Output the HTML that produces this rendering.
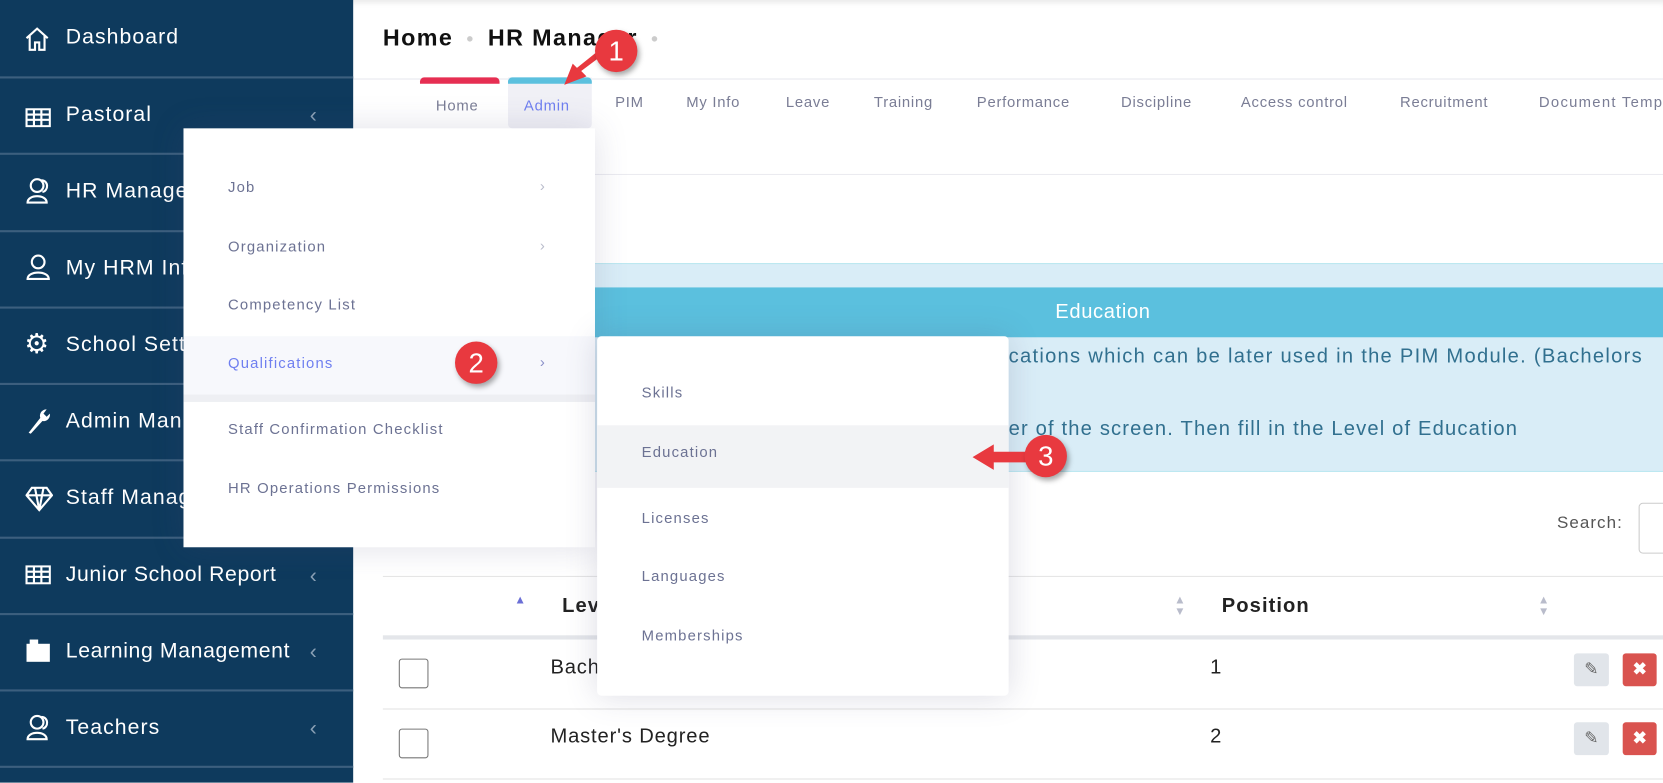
<!DOCTYPE html>
<html><head><meta charset="utf-8">
<style>
html,body{margin:0;padding:0;width:1663px;height:783px;overflow:hidden;background:#fff;}
#w{position:absolute;left:0;top:0;width:1568px;height:738px;transform:scale(1.06059);transform-origin:0 0;font-family:"Liberation Sans",sans-serif;overflow:hidden;}
.a{position:absolute;}
.sb{left:0;top:0;width:333px;height:738px;background:#0e3a5d;}
.sl{left:0;width:333px;height:2px;background:#3c5f7e;}
.st{color:#fff;font-size:20px;letter-spacing:1px;white-space:nowrap;}
.chev{color:#8aa0b5;font-size:20px;}
.tab{color:#7a7d95;font-size:14px;letter-spacing:.7px;white-space:nowrap;}
.m{color:#6c7293;font-size:14px;letter-spacing:1.1px;white-space:nowrap;}
.gt{color:#b9bccb;font-size:14px;}
.num{width:40px;height:40px;border-radius:50%;background:#e8393f;color:#fff;font-size:26px;text-align:center;line-height:40px;box-shadow:2px 3px 5px rgba(0,0,0,.35);}
</style></head><body><div id="w">
<div class="a" style="left:333px;top:0;width:1235px;height:74px;background:#fff;border-bottom:1px solid #e6e7ee;box-shadow:inset 0 6px 6px -4px rgba(0,0,0,.1)"></div>
<div class="a" style="left:361px;top:23px;font-size:22px;font-weight:bold;color:#111;letter-spacing:1.3px;white-space:nowrap">Home <span style="color:#ccc;font-size:12px;vertical-align:3px">&nbsp;●&nbsp;</span> HR Manager <span style="color:#ccc;font-size:12px;vertical-align:3px">&nbsp;●</span></div>
<div class="a" style="left:396px;top:73px;width:75px;height:6px;background:#e62e52;border-radius:4px 4px 0 0"></div>
<div class="a" style="left:479px;top:73px;width:79px;height:48px;background:#f0f0f6;border-radius:0 0 4px 4px"></div>
<div class="a" style="left:479px;top:73px;width:79px;height:6px;background:#5bc0de;border-radius:4px 4px 0 0"></div>
<div class="a tab" style="left:411px;top:91px">Home</div>
<div class="a tab" style="left:494px;top:91px;color:#6f7ff0">Admin</div>
<div class="a tab" style="left:580px;top:88px">PIM</div>
<div class="a tab" style="left:647px;top:88px">My Info</div>
<div class="a tab" style="left:741px;top:88px">Leave</div>
<div class="a tab" style="left:824px;top:88px">Training</div>
<div class="a tab" style="left:921px;top:88px">Performance</div>
<div class="a tab" style="left:1057px;top:88px">Discipline</div>
<div class="a tab" style="left:1170px;top:88px">Access control</div>
<div class="a tab" style="left:1320px;top:88px">Recruitment</div>
<div class="a tab" style="left:1451px;top:88px;letter-spacing:1.2px">Document Templates</div>
<div class="a" style="left:333px;top:164px;width:1235px;height:1px;background:#ebebf0"></div>
<div class="a" style="left:361px;top:248px;width:1220px;height:195px;background:#d9edf7;border:1px solid #bce8f1"></div>
<div class="a" style="left:361px;top:271px;width:1220px;height:47px;background:#5bc0de"></div>
<div class="a" style="left:995px;top:284px;color:#fff;font-size:19px;letter-spacing:.6px">Education</div>
<div class="a" style="left:951px;top:326px;color:#31708f;font-size:19px;white-space:nowrap;letter-spacing:1.2px">cations which can be later used in the PIM Module. (Bachelors</div>
<div class="a" style="left:951px;top:394px;color:#31708f;font-size:19px;white-space:nowrap;letter-spacing:1.1px">er of the screen. Then fill in the Level of Education</div>
<div class="a" style="left:1468px;top:485px;color:#555;font-size:16px;letter-spacing:1px">Search:</div>
<div class="a" style="left:1545px;top:474px;width:40px;height:46px;border:1px solid #ccc;border-radius:4px"></div>
<div class="a" style="left:361px;top:543px;width:1220px;height:1px;background:#e5e5e5"></div>
<div class="a" style="left:361px;top:599px;width:1220px;height:4px;background:#e4e6ea"></div>
<div class="a" style="left:361px;top:668px;width:1220px;height:1px;background:#e2e2e2"></div>
<div class="a" style="left:361px;top:734px;width:1220px;height:1px;background:#e2e2e2"></div>
<div class="a" style="left:485px;top:560px;color:#6b6fd6;font-size:11px">▲</div>
<div class="a" style="left:530px;top:561px;font-size:19px;font-weight:bold;color:#222;letter-spacing:1px">Level</div>
<div class="a gt" style="left:1107px;top:561px;line-height:11px;font-size:11px">▲<br>▼</div>
<div class="a" style="left:1152px;top:561px;font-size:19px;font-weight:bold;color:#222;letter-spacing:1px">Position</div>
<div class="a gt" style="left:1450px;top:561px;line-height:11px;font-size:11px">▲<br>▼</div>
<div class="a" style="left:376px;top:621px;width:26px;height:26px;border:1px solid #777;border-radius:3px"></div>
<div class="a" style="left:376px;top:687px;width:26px;height:26px;border:1px solid #777;border-radius:3px"></div>
<div class="a" style="left:519px;top:619px;font-size:19px;color:#222;letter-spacing:.8px">Bachelor's Degree</div>
<div class="a" style="left:519px;top:684px;font-size:19px;color:#222;letter-spacing:.8px">Master's Degree</div>
<div class="a" style="left:1141px;top:619px;font-size:19px;color:#222">1</div>
<div class="a" style="left:1141px;top:684px;font-size:19px;color:#222">2</div>
<div class="a" style="left:1484px;top:616px;width:33px;height:31px;background:#e1e5ea;border-radius:3px;color:#666;text-align:center;line-height:31px;font-size:16px">✎</div>
<div class="a" style="left:1530px;top:616px;width:32px;height:31px;background:#d9534f;border-radius:3px;color:#fff;text-align:center;line-height:31px;font-size:16px;font-weight:bold">✖</div>
<div class="a" style="left:1484px;top:681px;width:33px;height:31px;background:#e1e5ea;border-radius:3px;color:#666;text-align:center;line-height:31px;font-size:16px">✎</div>
<div class="a" style="left:1530px;top:681px;width:32px;height:31px;background:#d9534f;border-radius:3px;color:#fff;text-align:center;line-height:31px;font-size:16px;font-weight:bold">✖</div>
<div class="a sb"></div>
<div class="a sl" style="top:72px"></div><div class="a sl" style="top:144px"></div><div class="a sl" style="top:217px"></div><div class="a sl" style="top:289px"></div><div class="a sl" style="top:361px"></div><div class="a sl" style="top:433px"></div><div class="a sl" style="top:506px"></div><div class="a sl" style="top:578px"></div><div class="a sl" style="top:650px"></div><div class="a sl" style="top:722px"></div>
<svg class="a" style="left:22px;top:24px" width="26" height="26" viewBox="0 0 26 26" fill="none" stroke="#fff" stroke-width="2"><path d="M3 12 L13 3 L23 12 M6 10 V23 H11 V16 H15 V23 H20 V10"/></svg>
<div class="a st" style="left:62px;top:24px">Dashboard</div>
<svg class="a" style="left:24px;top:102px" width="24" height="18"><rect x="1" y="1" width="22" height="16" fill="none" stroke="#fff" stroke-width="2"/><path d="M1 6H23M1 11H23M8 1V17M15 1V17" stroke="#fff" stroke-width="2"/></svg>
<div class="a st" style="left:62px;top:97px">Pastoral</div><div class="a chev" style="left:292px;top:98px">‹</div>
<svg class="a" style="left:24px;top:167px" width="26" height="26" viewBox="0 0 26 26" fill="none" stroke="#fff" stroke-width="2"><circle cx="11" cy="8" r="6"/><path d="M2 24 C2 16 20 16 20 24 Z"/><path d="M15 3 C22 3 22 13 16 14"/></svg>
<div class="a st" style="left:62px;top:169px">HR Manager</div>
<svg class="a" style="left:24px;top:239px" width="26" height="26" viewBox="0 0 26 26" fill="none" stroke="#fff" stroke-width="2"><circle cx="12" cy="8" r="6"/><path d="M2 24 C2 16 22 16 22 24 Z"/></svg>
<div class="a st" style="left:62px;top:242px">My HRM Info</div>
<div class="a" style="left:23px;top:309px;color:#fff;font-size:26px">⚙</div>
<div class="a st" style="left:62px;top:314px">School Settings</div>
<svg class="a" style="left:24px;top:384px" width="24" height="26" viewBox="0 0 24 26"><path d="M3 24 L14 10 A6 6 0 0 1 20 2 L17 6 L20 9 L23 6 A6 6 0 0 1 16 13 L5 25 Z" fill="#fff"/></svg>
<div class="a st" style="left:62px;top:386px">Admin Manager</div>
<svg class="a" style="left:24px;top:457px" width="26" height="26" viewBox="0 0 26 26" fill="none" stroke="#fff" stroke-width="2"><path d="M6 3H20L25 10L13 24L1 10Z M1 10H25 M9 3L13 24L17 3"/></svg>
<div class="a st" style="left:62px;top:458px">Staff Management</div>
<svg class="a" style="left:24px;top:533px" width="24" height="18"><rect x="1" y="1" width="22" height="16" fill="none" stroke="#fff" stroke-width="2"/><path d="M1 6H23M1 11H23M8 1V17M15 1V17" stroke="#fff" stroke-width="2"/></svg>
<div class="a st" style="left:62px;top:531px;letter-spacing:.6px">Junior School Report</div><div class="a chev" style="left:292px;top:532px">‹</div>
<svg class="a" style="left:24px;top:601px" width="24" height="24"><rect x="1" y="6" width="22" height="17" fill="#fff"/><rect x="4" y="2" width="8" height="5" fill="#fff"/></svg>
<div class="a st" style="left:62px;top:603px;letter-spacing:.6px">Learning Management</div><div class="a chev" style="left:292px;top:604px">‹</div>
<svg class="a" style="left:24px;top:673px" width="26" height="26" viewBox="0 0 26 26" fill="none" stroke="#fff" stroke-width="2"><circle cx="11" cy="8" r="6"/><path d="M2 24 C2 16 20 16 20 24 Z"/><path d="M15 3 C22 3 22 13 16 14"/></svg>
<div class="a st" style="left:62px;top:675px">Teachers</div><div class="a chev" style="left:292px;top:676px">‹</div>
<div class="a" style="left:173px;top:121px;width:388px;height:395px;background:#fff;box-shadow:0 0 30px rgba(80,80,120,.18)"></div>
<div class="a" style="left:173px;top:317px;width:388px;height:55px;background:#f7f8fc"></div>
<div class="a" style="left:173px;top:372px;width:388px;height:7px;background:#eeeff3"></div>
<div class="a m" style="left:215px;top:168px">Job</div><div class="a gt" style="left:509px;top:167px">›</div>
<div class="a m" style="left:215px;top:224px">Organization</div><div class="a gt" style="left:509px;top:223px">›</div>
<div class="a m" style="left:215px;top:279px">Competency List</div>
<div class="a m" style="left:215px;top:334px;color:#6f7ff0">Qualifications</div><div class="a gt" style="left:509px;top:333px;color:#8a90c8">›</div>
<div class="a m" style="left:215px;top:396px">Staff Confirmation Checklist</div>
<div class="a m" style="left:215px;top:452px">HR Operations Permissions</div>
<div class="a" style="left:563px;top:317px;width:388px;height:339px;background:#fff;border-radius:4px;box-shadow:0 0 30px rgba(80,80,120,.2)"></div>
<div class="a" style="left:563px;top:401px;width:388px;height:59px;background:#f2f3f5"></div>
<div class="a m" style="left:605px;top:362px">Skills</div>
<div class="a m" style="left:605px;top:418px">Education</div>
<div class="a m" style="left:605px;top:480px">Licenses</div>
<div class="a m" style="left:605px;top:535px">Languages</div>
<div class="a m" style="left:605px;top:591px">Memberships</div>
<svg class="a" style="left:520px;top:40px" width="60" height="50"><path d="M48 12 L28 27 L33 32 L12 40 L20 20 L24 24 L44 8 Z" fill="#e8393f"/></svg>
<div class="a num" style="left:561px;top:28px">1</div>
<div class="a num" style="left:429px;top:322px">2</div>
<svg class="a" style="left:915px;top:415px" width="60" height="32"><path d="M2 16 L22 4 L22 11 L52 11 L52 21 L22 21 L22 28 Z" fill="#e8393f"/></svg>
<div class="a num" style="left:966px;top:410px">3</div>
</div></body></html>
